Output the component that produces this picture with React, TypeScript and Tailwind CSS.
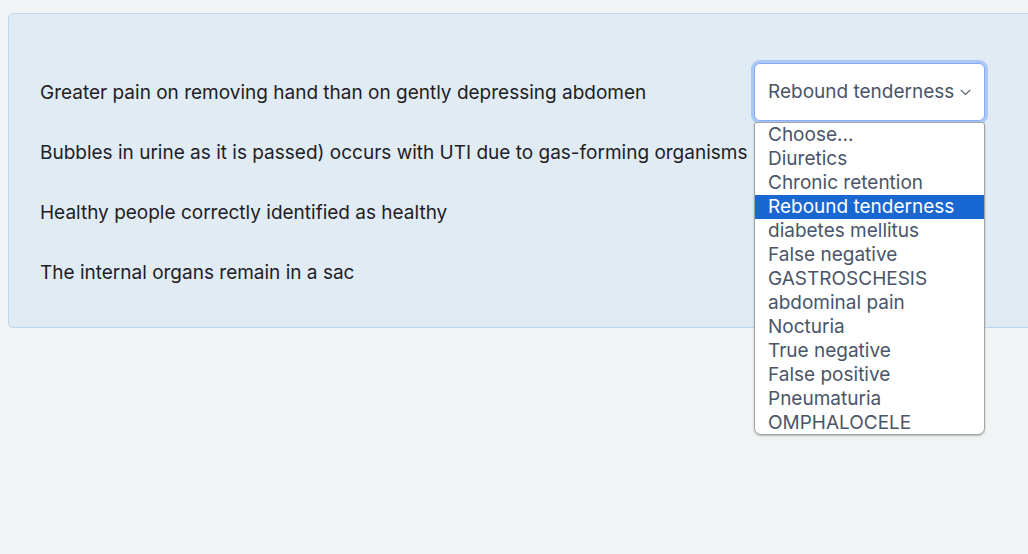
import React from "react";

const rows = [
  "Greater pain on removing hand than on gently depressing abdomen",
  "Bubbles in urine as it is passed) occurs with UTI due to gas-forming organisms",
  "Healthy people correctly identified as healthy",
  "The internal organs remain in a sac",
];

const options = [
  "Choose...",
  "Diuretics",
  "Chronic retention",
  "Rebound tenderness",
  "diabetes mellitus",
  "False negative",
  "GASTROSCHESIS",
  "abdominal pain",
  "Nocturia",
  "True negative",
  "False positive",
  "Pneumaturia",
  "OMPHALOCELE",
];

function Chevron() {
  return (
    <svg width="11" height="10" viewBox="0 0 11 10" className="shrink-0">
      <path d="M0.8 3 L5.5 7.5 L10.2 3" fill="none" stroke="#5b6472" strokeWidth="1.2" />
    </svg>
  );
}

export default function App() {
  return (
    <div
      className="w-[1028px] h-[554px] overflow-hidden bg-[#f0f4f5] relative"
      style={{ fontFamily: "Inter, 'Noto Sans', sans-serif" }}
    >
      <div className="mt-[13px] ml-[8px] w-[1040px] h-[315px] rounded-[5px] border border-[#bfd7ee] bg-[#e1ebf4] pt-[49px] pl-[31px]">
        {rows.map((r, i) => (
          <div key={i} className="flex items-center h-[60px]">
            <div className="w-[714px] shrink-0 text-[19px] leading-[24px] text-[#1d2125]">{r}</div>
            {i === 0 ? (
              <div className="w-[231px] h-[58px] -mt-[2px] shrink-0 rounded-[6px] bg-white flex items-center justify-between pl-[13px] pr-[13px] border border-[#86abf7] shadow-[0_0_0_3px_#abc7f6]">
                <span className="text-[19px] text-[#4a5568] leading-[24px] whitespace-nowrap">Rebound tenderness</span>
                <Chevron />
              </div>
            ) : (
              <div className="w-[231px] h-[56px] shrink-0 rounded-[6px] bg-white border border-[#8f959e]" />
            )}
          </div>
        ))}
      </div>
      <div className="absolute left-[754px] top-[122px] w-[231px] h-[313px] bg-white border border-[#a3a3a3] rounded-b-[7px] rounded-t-[3px] shadow-[0_1px_2px_rgba(0,0,0,0.25)] overflow-hidden">
        {options.map((o, i) => (
          <div
            key={i}
            className={
              "h-[24px] leading-[24px] pl-[13px] text-[19px] whitespace-nowrap " +
              (i === 3 ? "bg-[#1967d2] text-white" : "text-[#4a5568]")
            }
          >
            {o}
          </div>
        ))}
      </div>
    </div>
  );
}
